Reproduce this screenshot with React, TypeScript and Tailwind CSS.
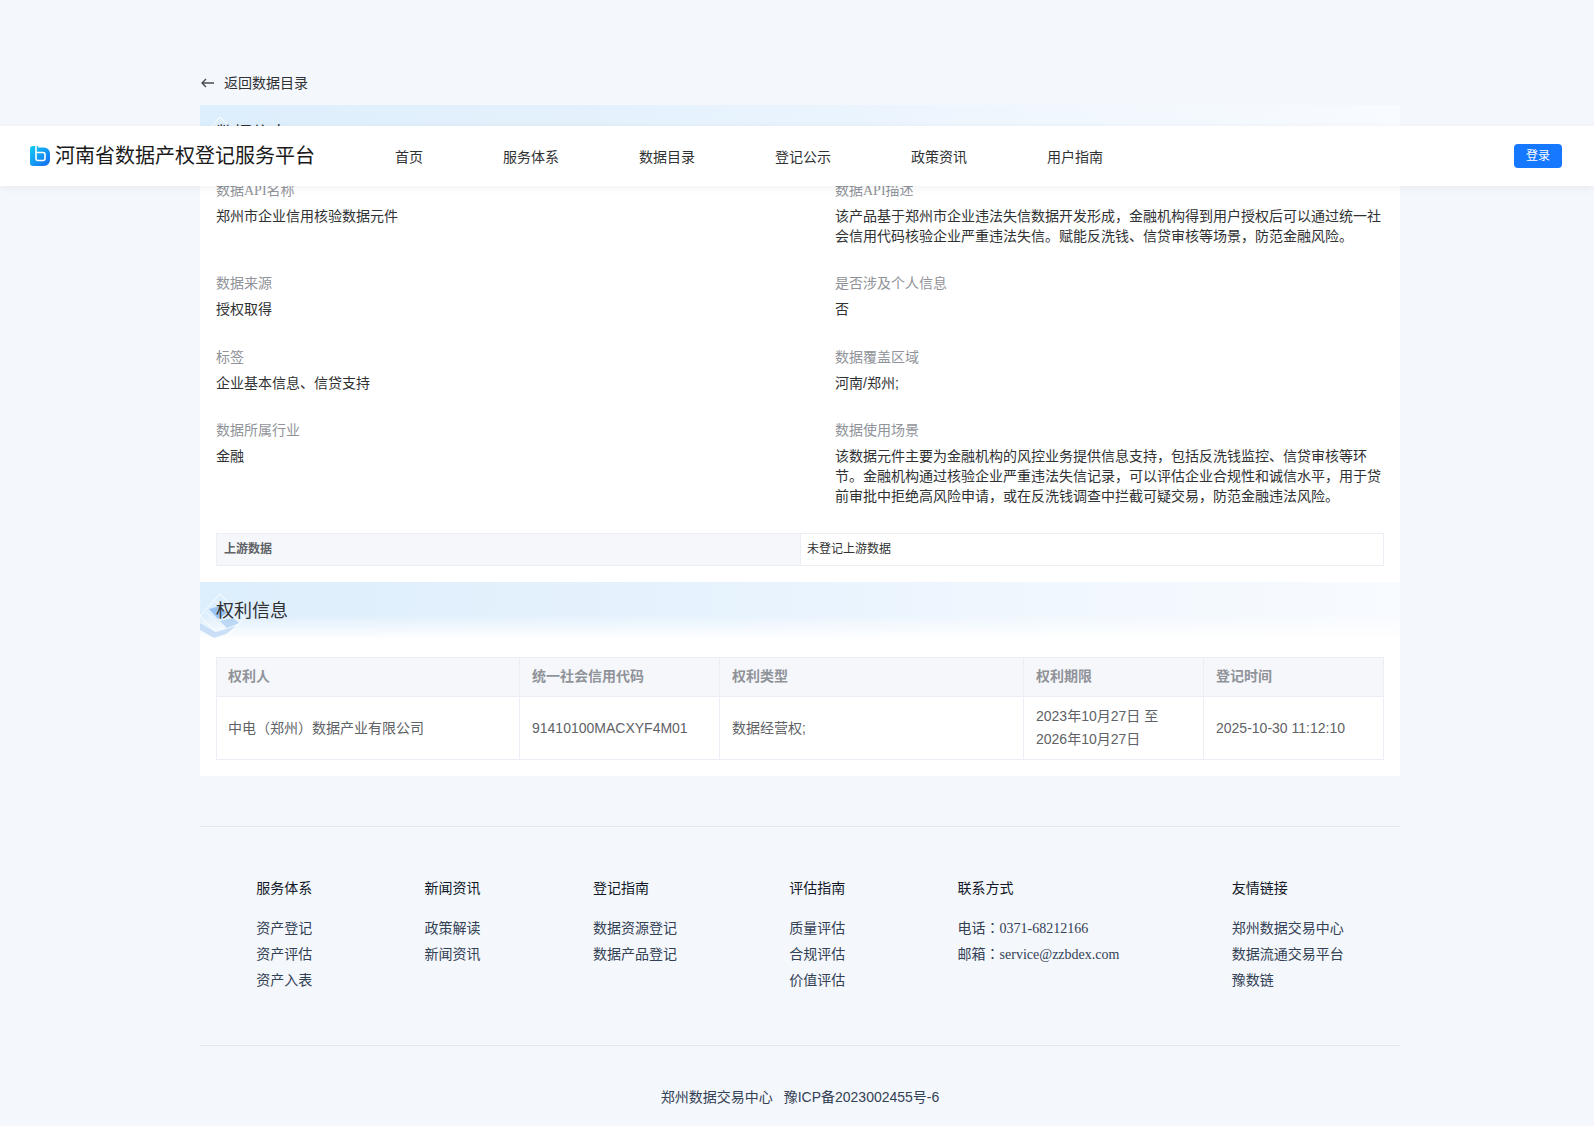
const sans = 'font-["Liberation_Sans","Noto_Sans_CJK_SC",sans-serif]';

const navItems = ['首页', '服务体系', '数据目录', '登记公示', '政策资讯', '用户指南'];

const footerCols = [
  { title: '服务体系', links: ['资产登记', '资产评估', '资产入表'] },
  { title: '新闻资讯', links: ['政策解读', '新闻资讯'] },
  { title: '登记指南', links: ['数据资源登记', '数据产品登记'] },
  { title: '评估指南', links: ['质量评估', '合规评估', '价值评估'] },
  { title: '联系方式', links: ['电话：0371-68212166', '邮箱：service@zzbdex.com'], serif: true },
  { title: '友情链接', links: ['郑州数据交易中心', '数据流通交易平台', '豫数链'] },
];

function Logo() {
  return (
    <svg width="20" height="20" viewBox="0 0 20 20" className="shrink-0">
      <defs>
        <linearGradient id="logo-fill" x1="0" y1="0" x2="1" y2="1">
          <stop offset="0" stopColor="#12cdf0" />
          <stop offset="1" stopColor="#1668f5" />
        </linearGradient>
      </defs>
      <path d="M3 0H8V1.5H14a6 6 0 0 1 6 6V14a6 6 0 0 1-6 6H3a3 3 0 0 1-3-3V3a3 3 0 0 1 3-3z" fill="url(#logo-fill)" />
      <path d="M6 0V12.5a2 2 0 0 0 2 2h5a2 2 0 0 0 2-2v-4a2 2 0 0 0-2-2H6" fill="none" stroke="#fff" strokeWidth="1.6" />
    </svg>
  );
}

function SectionBar({ title }: { title: string }) {
  return (
    <div className="relative h-[60px] overflow-hidden bg-[linear-gradient(180deg,rgba(255,255,255,0)_55%,#ffffff_95%),linear-gradient(90deg,#ddeefc_0%,#e6f2fd_40%,#f0f7fe_70%,#f8fbff_100%)] pl-4 pt-[14px]">
      <svg width="60" height="60" viewBox="0 0 60 60" className="absolute left-0 top-0 blur-[0.5px]">
        <path d="M20 12 44 36 24 58 0 34z" fill="none" stroke="#ffffff" strokeOpacity="0.9" />
        <path d="M14 18 38 38M6 30 26 50" stroke="#ffffff" strokeOpacity="0.7" />
        <path d="M9 27 20 24 27 31 18 37z" fill="#7fb0ec" fillOpacity="0.7" />
        <path d="M20 39 33 36 39 41 27 46z" fill="#9cc4f1" fillOpacity="0.6" />
        <path d="M0 41 16 50 36 44 26 52 14 56 0 48z" fill="#bfd8f5" fillOpacity="0.8" />
      </svg>
      <h2 className="relative text-[18px] leading-[30px] text-[#303133]">{title}</h2>
    </div>
  );
}

function Field({ label, value }: { label: string; value: string }) {
  return (
    <div className="mb-[28.5px]">
      <div className='font-["Liberation_Serif","Noto_Sans_CJK_SC",serif] text-sm leading-5 text-[#909399]'>{label}</div>
      <div className="mt-[5px] text-sm leading-5 text-[#303133]">{value}</div>
    </div>
  );
}

export default function App() {
  return (
    <div className={`relative min-h-[1126px] overflow-hidden bg-[#f4f7fc] ${sans}`}>
      {/* top bar sits over the scrolled page */}
      <header className="absolute left-0 right-0 top-[126px] z-10 flex h-[60px] items-center bg-white pl-[30px] pr-8 shadow-[0_2px_8px_rgba(0,0,0,0.06)]">
        <Logo />
        <div className="ml-[5px] w-[260px] text-[20px] leading-[26px] text-[#1a1a1a] -mt-[1px]">河南省数据产权登记服务平台</div>
        <nav className="ml-[80px] flex gap-[80px] pt-[1px] text-sm text-[#303133]">
          {navItems.map((item) => (
            <span key={item}>{item}</span>
          ))}
        </nav>
        <button className="ml-auto h-6 w-12 rounded-[4px] bg-[#1677ff] text-xs text-white">登录</button>
      </header>

      <main className="ml-[200px] w-[1200px] pt-[73px]">
        <div className="mb-[12px] flex h-5 items-center text-sm text-[#303133]">
          <svg width="13" height="12" viewBox="0 0 13 12" fill="none" stroke="#4a4d55" strokeWidth="1.4" className="ml-[1px]">
            <path d="M1 6H13M5 2 1 6l4 4" />
          </svg>
          <span className="ml-[10px]">返回数据目录</span>
        </div>

        <div className="bg-white pb-4">
          <SectionBar title="数据信息" />
          <div className="px-4 pt-[15.5px]">
            <div className="grid grid-cols-[549px_549px] gap-x-[70px]">
              <Field label="数据API名称" value="郑州市企业信用核验数据元件" />
              <Field
                label="数据API描述"
                value="该产品基于郑州市企业违法失信数据开发形成，金融机构得到用户授权后可以通过统一社会信用代码核验企业严重违法失信。赋能反洗钱、信贷审核等场景，防范金融风险。"
              />
              <Field label="数据来源" value="授权取得" />
              <Field label="是否涉及个人信息" value="否" />
              <Field label="标签" value="企业基本信息、信贷支持" />
              <Field label="数据覆盖区域" value="河南/郑州;" />
              <Field label="数据所属行业" value="金融" />
              <Field
                label="数据使用场景"
                value="该数据元件主要为金融机构的风控业务提供信息支持，包括反洗钱监控、信贷审核等环节。金融机构通过核验企业严重违法失信记录，可以评估企业合规性和诚信水平，用于贷前审批中拒绝高风险申请，或在反洗钱调查中拦截可疑交易，防范金融违法风险。"
              />
            </div>
            <div className="-mt-[2px] flex h-[33px] border border-[#ebeef5] text-xs leading-[31px]">
              <div className="w-[584px] border-r border-[#ebeef5] bg-[#f5f7fa] pl-[7px] font-bold text-[#606266]">上游数据</div>
              <div className="pl-[6px] text-[#303133]">未登记上游数据</div>
            </div>
          </div>

          <div className="mt-4">
            <SectionBar title="权利信息" />
          </div>
          <div className="px-4 pt-[15px]">
            <table className="w-[1167px] table-fixed border-collapse text-sm">
              <colgroup>
                <col className="w-[303px]" />
                <col className="w-[200px]" />
                <col className="w-[304px]" />
                <col className="w-[180px]" />
                <col className="w-[180px]" />
              </colgroup>
              <thead>
                <tr className="h-[39px] bg-[#f5f7fa] text-left font-bold text-[#909399]">
                  {['权利人', '统一社会信用代码', '权利类型', '权利期限', '登记时间'].map((h, i) => (
                    <th key={h} className={`border border-[#ebeef5] pb-[2px] pr-3 ${i === 0 ? 'pl-[11px]' : 'pl-3'}`}>{h}</th>
                  ))}
                </tr>
              </thead>
              <tbody>
                <tr className="h-[63px] text-[#606266]">
                  <td className="border border-[#ebeef5] pl-[11px] pr-3">中电（郑州）数据产业有限公司</td>
                  <td className="border border-[#ebeef5] px-3">91410100MACXYF4M01</td>
                  <td className="border border-[#ebeef5] px-3">数据经营权;</td>
                  <td className="border border-[#ebeef5] px-3 leading-[23px]">2023年10月27日 至 2026年10月27日</td>
                  <td className="border border-[#ebeef5] px-3">2025-10-30 11:12:10</td>
                </tr>
              </tbody>
            </table>
          </div>
        </div>

        <footer className="mt-[50px]">
          <div className="border-t border-[#e4e8ee] pb-[51px]" />
          <div className="flex h-[167px] justify-around">
            {footerCols.map((col) => (
              <div key={col.title} className={col.serif ? 'font-["Liberation_Serif","Noto_Sans_CJK_TC",serif]' : ''}>
                <div className={`text-sm leading-5 text-[#111827] ${col.serif ? 'mb-[21px]' : 'mb-[20px]'} ${sans}`}>{col.title}</div>
                <div className="flex flex-col gap-[6px] text-sm leading-5 text-[#334155]">
                  {col.links.map((link) => (
                    <span key={link}>{link}</span>
                  ))}
                </div>
              </div>
            ))}
          </div>
          <div className="border-t border-[#e4e8ee] pt-[41px] pb-[19px] text-center text-sm leading-5 text-[#334155]">
            郑州数据交易中心<span className="ml-[11px]">豫ICP备2023002455号-6</span>
          </div>
        </footer>
      </main>
    </div>
  );
}
